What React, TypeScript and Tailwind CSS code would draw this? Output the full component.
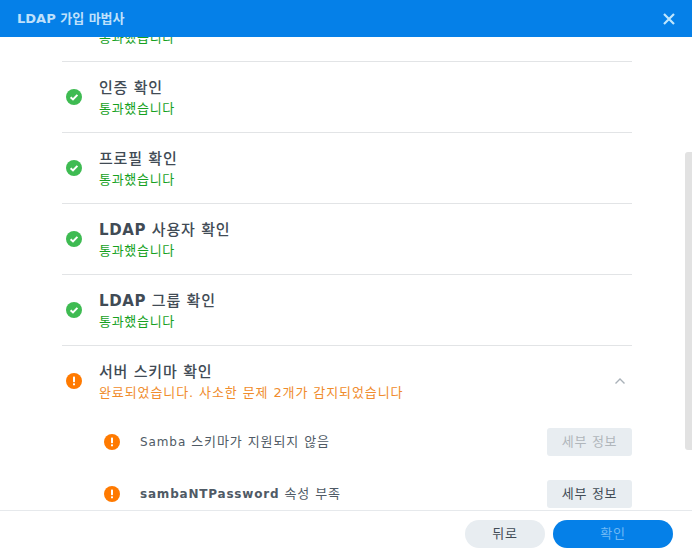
import React from "react";

const font = { fontFamily: '"DejaVu Sans","Noto Sans CJK KR",sans-serif' };

function CheckIcon() {
  return (
    <svg width="16" height="16" viewBox="0 0 16 16" className="shrink-0">
      <circle cx="8" cy="8" r="8" fill="#3ebb52" />
      <path d="M4.6 8.2 7 10.4 11.4 5.9" fill="none" stroke="#fff" strokeWidth="2" />
    </svg>
  );
}

function WarnIcon() {
  return (
    <svg width="16" height="16" viewBox="0 0 16 16" className="shrink-0">
      <circle cx="8" cy="8" r="8" fill="#ff7a00" />
      <rect x="7" y="3.6" width="2" height="5.6" rx="0.6" fill="#fff" />
      <rect x="7" y="10.3" width="2" height="2" rx="0.5" fill="#fff" />
    </svg>
  );
}

function Title({ latin, children }: { latin?: string; children: React.ReactNode }) {
  return (
    <div className="text-[15px] leading-[20px] tracking-[0.8px] font-medium text-[#414b55]">
      {latin ? <span className="text-[15px] font-bold tracking-[0.6px]">{latin} </span> : null}
      {children}
    </div>
  );
}

function PassRow({ title, latin }: { title: string; latin?: string }) {
  return (
    <div className="flex h-[71px] items-center border-t border-[#e2e4e6]">
      <div className="ml-[4px] w-[33px]"><CheckIcon /></div>
      <div className="flex flex-col pt-[2px] pb-[1px]">
        <Title latin={latin}>{title}</Title>
        <div className="mt-[2px] text-[13px] leading-[18px] tracking-[0.7px] text-[#17a11f]">통과했습니다</div>
      </div>
    </div>
  );
}

function SubRow({ latin, text, bold, disabled }: { latin: string; text: string; bold?: boolean; disabled?: boolean }) {
  return (
    <div className="flex h-[52px] items-center pl-[42px]">
      <div className="w-[36px]"><WarnIcon /></div>
      <div className="flex-1 text-[13px] tracking-[0.9px] text-[#4f5a65]">
        <span className={`text-[12px] ${bold ? "font-bold tracking-[0.8px]" : ""}`}>{latin}</span> {text}
      </div>
      <button className={`h-[28px] w-[85px] rounded-[3px] bg-[#e8edf1] text-[13px] tracking-[0.7px] ${disabled ? "text-[#b0b6bb]" : "text-[#414b55]"}`}>세부 정보</button>
    </div>
  );
}

export default function App() {
  return (
    <div className="flex h-[557px] w-[692px] flex-col overflow-hidden bg-white" style={font}>
      <header className="z-10 flex h-[37px] shrink-0 items-center justify-between bg-[#0580e8] pl-[17px] pr-[17px]">
        <span className="text-[13px] font-bold text-[#bfe0fb]">LDAP 가입 마법사</span>
        <svg width="12" height="12" viewBox="0 0 12 12">
          <path d="M1 1 11 11M11 1 1 11" stroke="#bfe6fd" strokeWidth="2.2" />
        </svg>
      </header>
      <div className="relative h-[473px] overflow-hidden">
        <div className="-mt-[47px] ml-[62px] w-[570px]">
          <div className="flex h-[71px] flex-col justify-end pb-[14px] pl-[37px]">
            <div className="text-[13px] leading-[18px] tracking-[0.7px] text-[#17a11f]">통과했습니다</div>
          </div>
          <PassRow title="인증 확인" />
          <PassRow title="프로필 확인" />
          <PassRow latin="LDAP" title="사용자 확인" />
          <PassRow latin="LDAP" title="그룹 확인" />
          <div className="flex h-[71px] items-center border-t border-[#e2e4e6]">
            <div className="ml-[4px] w-[33px]"><WarnIcon /></div>
            <div className="flex flex-1 flex-col pt-[2px] pb-[1px]">
              <Title>서버 스키마 확인</Title>
              <div className="mt-[2px] text-[13px] leading-[18px] tracking-[0.9px] text-[#f08c2c]">완료되었습니다. 사소한 문제 2개가 감지되었습니다</div>
            </div>
            <svg width="12" height="8" viewBox="0 0 12 8" className="mr-[6px]">
              <path d="M1.5 6.5 6 2 10.5 6.5" fill="none" stroke="#a9b1b8" strokeWidth="1.4" />
            </svg>
          </div>
          <SubRow latin="Samba" text="스키마가 지원되지 않음" disabled />
          <SubRow latin="sambaNTPassword" text="속성 부족" bold />
        </div>
        <div className="absolute right-0 top-[115px] h-[298px] w-[7px] rounded-l-[3px] bg-[#e2e2e2]" />
      </div>
      <footer className="flex flex-1 items-start justify-end gap-[8px] border-t border-[#e6e9ec] pr-[19px] pt-[9px]">
        <button className="h-[28px] w-[80px] rounded-full bg-[#e8edf1] text-[13px] tracking-[0.7px] text-[#414b55]">뒤로</button>
        <button className="h-[28px] w-[120px] rounded-full bg-[#0580e8] text-[13px] tracking-[0.7px] text-[#6fb8f5]">확인</button>
      </footer>
    </div>
  );
}
